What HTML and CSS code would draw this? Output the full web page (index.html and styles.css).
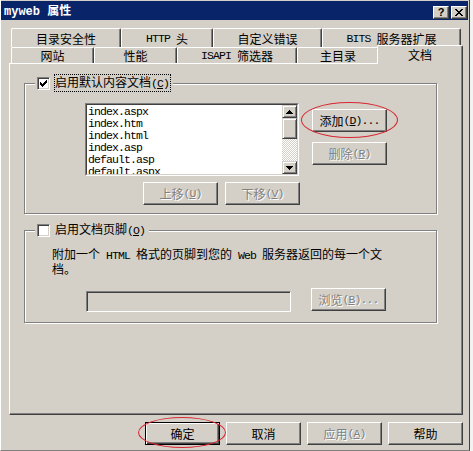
FILE: index.html
```html
<!DOCTYPE html>
<html lang="zh-CN">
<head>
<meta charset="utf-8">
<title>myweb 属性</title>
<link rel="stylesheet" href="styles.css">
</head>
<body>
<div class="window">
  <div class="titlebar">
    <div class="title"><span class="tm">myweb </span>属性</div>
    <div class="capbtns">
      <div class="capbtn q">?</div>
      <div class="capbtn"><svg width="8" height="7" viewBox="0 0 8 7" shape-rendering="crispEdges"><path d="M0 0h2v1H0zM6 0h2v1H6zM1 1h2v1H1zM5 1h2v1H5zM2 2h4v1H2zM3 3h2v1H3zM2 4h4v1H2zM1 5h2v1H1zM5 5h2v1H5zM0 6h2v1H0zM6 6h2v1H6z" fill="#000"/></svg></div>
    </div>
  </div>

  <div class="tabrow row1">
    <div class="tab w110">目录安全性</div>
    <div class="tab w92"><span class="m">HTTP </span>头</div>
    <div class="tab w109">自定义错误</div>
    <div class="tab w139"><span class="m">BITS </span>服务器扩展</div>
  </div>
  <div class="tabrow row2">
    <div class="tab w83">网站</div>
    <div class="tab w83">性能</div>
    <div class="tab w120"><span class="m">ISAPI </span>筛选器</div>
    <div class="tab w82">主目录</div>
    <div class="tab sel">文档</div>
  </div>

  <div class="panel">
    <div class="group g1">
      <div class="legend">
        <div class="cb"><svg width="7" height="7" viewBox="0 0 7 7" shape-rendering="crispEdges"><path d="M6 0h1v1H6zM5 1h2v1H5zM0 2h1v1H0zM4 2h3v1H4zM0 3h2v1H0zM3 3h3v1H3zM0 4h5v1H0zM1 5h3v1H1zM2 6h1v1H2z" fill="#000"/></svg></div>
        <span class="lbl focus">启用默认内容文档<span class="m">(<u>C</u>)</span></span>
      </div>
      <div class="lrow">
        <div class="listbox">
          <div class="lbin">
            <div class="items">
              <div class="m">index.aspx</div>
              <div class="m">index.htm</div>
              <div class="m">index.html</div>
              <div class="m">index.asp</div>
              <div class="m">default.asp</div>
              <div class="m">default.aspx</div>
              <div class="m">iisstart.asp</div>
            </div>
            <div class="sb">
              <div class="sbtn"><svg width="7" height="4" viewBox="0 0 7 4" shape-rendering="crispEdges"><path d="M3 0h1v1H3zM2 1h3v1H2zM1 2h5v1H1zM0 3h7v1H0z" fill="#000"/></svg></div>
              <div class="thumb"></div>
              <div class="track"></div>
              <div class="sbtn"><svg width="7" height="4" viewBox="0 0 7 4" shape-rendering="crispEdges"><path d="M0 0h7v1H0zM1 1h5v1H1zM2 2h3v1H2zM3 3h1v1H3z" fill="#000"/></svg></div>
            </div>
          </div>
        </div>
        <div class="btncol">
          <div class="btn">添加<span class="m">(<u>D</u>)...</span><span class="ring ring1"></span></div>
          <div class="btn dis">删除<span class="m">(<u>R</u>)</span></div>
        </div>
      </div>
      <div class="mrow">
        <div class="btn dis">上移<span class="m">(<u>U</u>)</span></div>
        <div class="btn dis">下移<span class="m">(<u>V</u>)</span></div>
      </div>
    </div>

    <div class="group g2">
      <div class="legend">
        <div class="cb"></div>
        <span class="lbl">启用文档页脚<span class="m">(<u>O</u>)</span></span>
      </div>
      <div class="para">附加一个<span class="m"> HTML </span>格式的页脚到您的<span class="m"> Web </span>服务器返回的每一个文档。</div>
      <div class="frow">
        <div class="field"></div>
        <div class="btn dis">浏览<span class="m">(<u>B</u>)...</span></div>
      </div>
    </div>
  </div>

  <div class="footer">
    <div class="btn def">确定<span class="ring ring2"></span></div>
    <div class="btn">取消</div>
    <div class="btn dis">应用<span class="m">(<u>A</u>)</span></div>
    <div class="btn">帮助</div>
  </div>
</div>
</body>
</html>
```

FILE: styles.css
```css
* { box-sizing: border-box; }
html, body { margin: 0; padding: 0; }
body {
  width: 473px;
  height: 451px;
  overflow: hidden;
  background: #f2f2f2;
  font-family: "Noto Sans CJK SC", "Noto Sans", sans-serif;
  font-size: 12px;
  color: #000;
}
.m {
  font-family: "Liberation Mono", "Noto Sans CJK SC", monospace;
  font-size: 11.5px;
  letter-spacing: -0.9px;
}
u { text-underline-offset: 1px; }

.window {
  width: 470px;
  height: 451px;
  background: #d4d0c8;
  border-left: 1px solid #fff;
  border-right: 1px solid #404040;
  border-bottom: 1px solid #808080;
  padding-top: 1px;
  display: flex;
  flex-direction: column;
}

/* title bar */
.titlebar {
  height: 19px;
  margin-right: 1px;
  background: #0a246a;
  color: #fff;
  display: flex;
  align-items: center;
  justify-content: space-between;
  padding: 1px 1px 0 3px;
}
.title { font-weight: bold; line-height: 14px; white-space: pre; }
.tm {
  font-family: "Liberation Mono", monospace;
  font-size: 12px;
  font-weight: bold;
}
.capbtns { display: flex; gap: 2px; margin-top: 2px; }
.capbtn {
  width: 16px;
  height: 13px;
  background: #d4d0c8;
  border: 1px solid;
  border-color: #fff #404040 #404040 #fff;
  box-shadow: inset -1px -1px #808080;
  display: flex;
  align-items: center;
  justify-content: center;
  color: #000;
}
.capbtn.q {
  font-family: "Liberation Sans", sans-serif;
  font-weight: bold;
  font-size: 11px;
  line-height: 11px;
}

/* tabs */
.tabrow { display: flex; margin-left: 10px; }
.row1 { margin-top: 8px; height: 19px; }
.row2 { height: 16px; }
.tab {
  height: 100%;
  background: #d4d0c8;
  border-left: 1px solid #fff;
  border-top: 1px solid #fff;
  border-right: 1px solid #404040;
  box-shadow: inset -1px 0 #808080;
  border-radius: 2px 2px 0 0;
  display: flex;
  align-items: center;
  justify-content: center;
  line-height: 12px;
  white-space: pre;
}
.row1 .tab { padding-top: 1px; }
.row2 .tab { padding-top: 1px; }
.w110 { width: 110px; }
.w92 { width: 92px; }
.w109 { width: 109px; }
.w139 { width: 139px; }
.w83 { width: 83px; }
.w120 { width: 120px; }
.w82 { width: 82px; }
.tab.sel {
  width: 86px;
  height: 19px;
  margin: -2px -2px 0 -2px;
  position: relative;
  z-index: 1;
  padding: 0 0 1px 0;
}

/* panel */
.panel {
  margin-left: 8px;
  width: 454px;
  height: 352px;
  background: #d4d0c8;
  border-left: 1px solid #fff;
  border-top: 1px solid #fff;
  border-right: 1px solid #404040;
  border-bottom: 1px solid #404040;
  box-shadow: inset -1px -1px #808080;
  padding: 19px 0 0 14px;
}

.group {
  width: 413px;
  border: 1px solid #808080;
  box-shadow: inset 1px 1px #fff, 1px 1px #fff;
}
.g1 { height: 131px; }
.g2 { height: 93px; margin-top: 16px; }

.legend {
  display: flex;
  align-items: center;
  gap: 4px;
  width: max-content;
  height: 16px;
  margin: -9px 0 0 10px;
  padding: 0 2px;
  background: #d4d0c8;
}
.cb {
  width: 13px;
  height: 13px;
  background: #fff;
  border: 1px solid;
  border-color: #808080 #fff #fff #808080;
  box-shadow: inset 1px 1px #404040, inset -1px -1px #d4d0c8;
  display: flex;
  align-items: center;
  justify-content: center;
}
.lbl {
  border: 1px solid transparent;
  line-height: 14px;
  padding-right: 1px;
  white-space: pre;
}
.lbl.focus { border: 1px dotted #000; }

/* list row */
.lrow { display: flex; margin: 12px 0 0 60px; align-items: flex-start; }
.listbox {
  width: 214px;
  height: 73px;
  border: 1px solid;
  border-color: #808080 #fff #fff #808080;
  background: #fff;
}
.lbin {
  height: 100%;
  border: 1px solid;
  border-color: #404040 #d4d0c8 #d4d0c8 #404040;
  display: flex;
}
.items {
  flex: 1;
  overflow: hidden;
  padding: 1px 0 0 1px;
  line-height: 12px;
  white-space: nowrap;
}
.items div { display: block; }
.sb { width: 15px; flex: none; display: flex; flex-direction: column; }
.sbtn, .thumb {
  background: #d4d0c8;
  border: 1px solid;
  border-color: #d4d0c8 #404040 #404040 #d4d0c8;
  box-shadow: inset 1px 1px #fff, inset -1px -1px #808080;
}
.sbtn { height: 13px; display: flex; align-items: center; justify-content: center; }
.thumb { height: 21px; }
.track {
  height: 22px;
  background: repeating-conic-gradient(#fff 0 25%, #d4d0c8 0 50%) 0 0 / 2px 2px;
}

.btncol { display: flex; flex-direction: column; gap: 10px; margin: 6px 0 0 13px; }
.mrow { display: flex; gap: 7px; margin: 6px 0 0 118px; }

.btn {
  position: relative;
  width: 75px;
  height: 23px;
  background: #d4d0c8;
  border: 1px solid;
  border-color: #fff #404040 #404040 #fff;
  box-shadow: inset -1px -1px #808080;
  display: flex;
  align-items: center;
  justify-content: center;
  line-height: 12px;
  white-space: pre;
}
.btn.dis { color: #808080; text-shadow: 1px 1px #fff; }
.btn.def {
  border-color: #000;
  box-shadow: inset 1px 1px #fff, inset -1px -1px #404040, inset -2px -2px #808080;
}

.ring {
  position: absolute;
  border: 1px solid #d9262f;
  border-radius: 50%;
  pointer-events: none;
}
.ring1 { left: -12px; top: -8px; width: 97px; height: 36px; }
.ring2 { left: -8px; top: -6px; width: 88px; height: 31px; }

/* footer group */
.para {
  margin: 9px 0 0 27px;
  width: 336px;
  line-height: 13px;
}
.frow { display: flex; align-items: flex-start; margin: 13px 0 0 61px; gap: 20px; }
.field {
  width: 205px;
  height: 21px;
  margin-top: 3px;
  border: 1px solid;
  border-color: #808080 #fff #fff #808080;
  box-shadow: inset 1px 1px #404040, inset -1px -1px #d4d0c8;
  background: #d4d0c8;
}

.footer {
  display: flex;
  justify-content: flex-end;
  gap: 6px;
  margin-top: 7px;
  padding-right: 6px;
}
```
